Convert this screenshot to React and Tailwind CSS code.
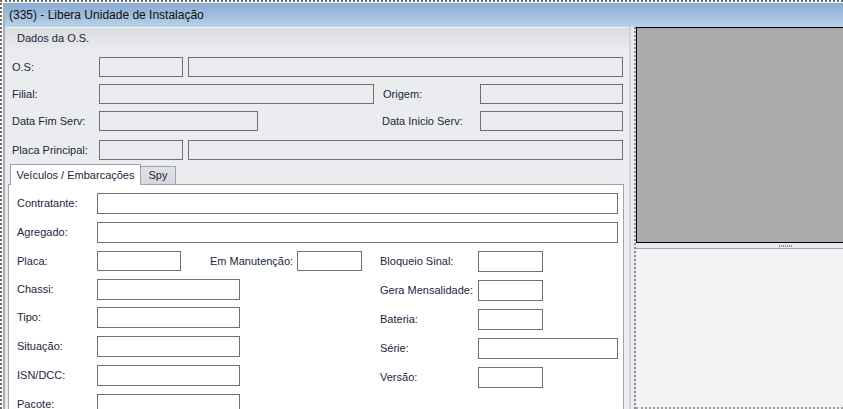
import React from 'react';

// Campos da parte superior (desabilitados, fundo cinza)
function Campo({ w, className = '' }) {
  return <div className={`h-[20px] shrink-0 border border-[#707070] bg-[#eaebee] ${w} ${className}`} />;
}

// Campos da aba (fundo branco)
function Entrada({ w, h = 'h-[21px]' }) {
  return <div className={`${h} shrink-0 border border-[#707070] bg-white ${w}`} />;
}

function Rotulo({ children, w, className = '' }) {
  return (
    <span className={`${w} ${className} block shrink-0 text-[11px] leading-none text-[#1b2740] whitespace-nowrap`}>
      {children}
    </span>
  );
}

export default function App() {
  return (
    <div className="w-[843px] h-[409px] overflow-hidden bg-white border-t-2 border-l-2 border-dotted border-[#6a6a6a] font-['Liberation_Sans',Arial,sans-serif]">
      <div className="h-full pt-px pl-px">
        <div className="flex flex-col h-full border-l-2 border-[#a9adb5]">
          {/* Barra de título */}
          <div className="h-[24px] shrink-0 flex items-center pl-[4px] bg-gradient-to-b from-[#87aacf] to-[#bad2ea] text-[12px] text-[#101010]">
            (335) - Libera Unidade de Instalação
          </div>

          <div className="flex flex-1 min-h-0">
            {/* Painel esquerdo */}
            <div className="w-[624px] shrink-0 flex flex-col bg-[#ebecef]">
              <div className="h-[21px] shrink-0 flex items-center pl-[12px] border-t border-[#f3f4f6] bg-gradient-to-b from-[#dadbdf] to-[#e9eaed] text-[11px] text-[#1b2740]">
                Dados da O.S.
              </div>

              <div className="pl-[7px] shrink-0">
                <div className="flex items-center h-[20px] mt-[9px]">
                  <Rotulo w="w-[87px]">O.S:</Rotulo>
                  <Campo w="w-[84px]" />
                  <Campo w="w-[435px]" className="ml-[5px]" />
                </div>
                <div className="flex items-center h-[20px] mt-[7px]">
                  <Rotulo w="w-[87px]">Filial:</Rotulo>
                  <Campo w="w-[275px]" />
                  <Rotulo w="w-[97px]" className="ml-[9px]">Origem:</Rotulo>
                  <Campo w="w-[143px]" />
                </div>
                <div className="flex items-center h-[20px] mt-[7px]">
                  <Rotulo w="w-[87px]">Data Fim Serv:</Rotulo>
                  <Campo w="w-[159px]" />
                  <Rotulo w="w-[98px]" className="ml-[124px]">Data Inicio Serv:</Rotulo>
                  <Campo w="w-[143px]" />
                </div>
                <div className="flex items-center h-[20px] mt-[9px]">
                  <Rotulo w="w-[87px]">Placa Principal:</Rotulo>
                  <Campo w="w-[84px]" />
                  <Campo w="w-[435px]" className="ml-[5px]" />
                </div>
              </div>

              {/* Abas */}
              <div className="flex items-end mt-[4px] pl-[5px] h-[20px] shrink-0">
                <div className="relative z-10 -mb-px h-[21px] w-[131px] flex items-center justify-center bg-white border border-b-0 border-[#9fa3a9] text-[11px] text-[#1b2740]">
                  Veículos / Embarcações
                </div>
                <div className="h-[18px] w-[35px] flex items-center justify-center bg-gradient-to-b from-[#e2e3e6] to-[#d5d6da] border border-l-0 border-b-0 border-[#9fa3a9] text-[11px] text-[#1b2740]">
                  Spy
                </div>
              </div>

              <div className="ml-[3px] w-[616px] flex-1 bg-white border border-b-0 border-[#9fa3a9] pl-[8px] pt-[8px]">
                <div className="flex items-center">
                  <Rotulo w="w-[80px]">Contratante:</Rotulo>
                  <Entrada w="w-[521px]" />
                </div>
                <div className="flex items-center mt-[8px]">
                  <Rotulo w="w-[80px]">Agregado:</Rotulo>
                  <Entrada w="w-[521px]" />
                </div>

                <div className="flex mt-[8px]">
                  <div className="flex flex-col">
                    <div className="flex items-center">
                      <Rotulo w="w-[80px]">Placa:</Rotulo>
                      <Entrada w="w-[84px]" h="h-[20px]" />
                      <Rotulo w="w-[87px]" className="ml-[29px]">Em Manutenção:</Rotulo>
                      <Entrada w="w-[65px]" h="h-[20px]" />
                    </div>
                    <div className="flex items-center mt-[8px]">
                      <Rotulo w="w-[80px]">Chassi:</Rotulo>
                      <Entrada w="w-[143px]" />
                    </div>
                    <div className="flex items-center mt-[7px]">
                      <Rotulo w="w-[80px]">Tipo:</Rotulo>
                      <Entrada w="w-[143px]" />
                    </div>
                    <div className="flex items-center mt-[8px]">
                      <Rotulo w="w-[80px]">Situação:</Rotulo>
                      <Entrada w="w-[143px]" />
                    </div>
                    <div className="flex items-center mt-[8px]">
                      <Rotulo w="w-[80px]">ISN/DCC:</Rotulo>
                      <Entrada w="w-[143px]" />
                    </div>
                    <div className="flex items-center mt-[8px]">
                      <Rotulo w="w-[80px]">Pacote:</Rotulo>
                      <Entrada w="w-[143px]" />
                    </div>
                  </div>

                  <div className="flex flex-col ml-[18px]">
                    <div className="flex items-center">
                      <Rotulo w="w-[98px]">Bloqueio Sinal:</Rotulo>
                      <Entrada w="w-[65px]" />
                    </div>
                    <div className="flex items-center mt-[8px]">
                      <Rotulo w="w-[98px]">Gera Mensalidade:</Rotulo>
                      <Entrada w="w-[65px]" />
                    </div>
                    <div className="flex items-center mt-[8px]">
                      <Rotulo w="w-[98px]">Bateria:</Rotulo>
                      <Entrada w="w-[65px]" />
                    </div>
                    <div className="flex items-center mt-[8px]">
                      <Rotulo w="w-[98px]">Série:</Rotulo>
                      <Entrada w="w-[140px]" />
                    </div>
                    <div className="flex items-center mt-[8px]">
                      <Rotulo w="w-[98px]">Versão:</Rotulo>
                      <Entrada w="w-[65px]" />
                    </div>
                  </div>
                </div>
              </div>
            </div>

            {/* Divisor vertical */}
            <div className="w-[7px] shrink-0 flex bg-[#e9eaee]">
              <div className="w-[2px] bg-[#d2d4d9]" />
              <div className="flex-1" />
              <div className="w-[2px] border-r-2 border-dotted border-[#8c8c8c]" />
            </div>

            {/* Painel direito */}
            <div className="flex-1 flex flex-col min-w-0">
              <div className="h-[216px] shrink-0 bg-[#ababab] border-t border-l border-b border-black" />
              <div className="h-[5px] shrink-0 bg-[#e7e8ec] flex items-center justify-end pr-[51px]">
                <div className="flex gap-px">
                  {[0, 1, 2, 3, 4, 5, 6].map(i => (
                    <span key={i} className="w-px h-[2px] bg-[#8a8f9c]" />
                  ))}
                </div>
              </div>
              <div className="flex-1 flex flex-col bg-[#f3f3f6] border-t border-[#9ea3b0]">
                <div className="flex-1" />
                <div className="h-[2px] border-b-2 border-dotted border-[#a0a0a0]" />
              </div>
            </div>
          </div>
        </div>
      </div>
    </div>
  );
}
